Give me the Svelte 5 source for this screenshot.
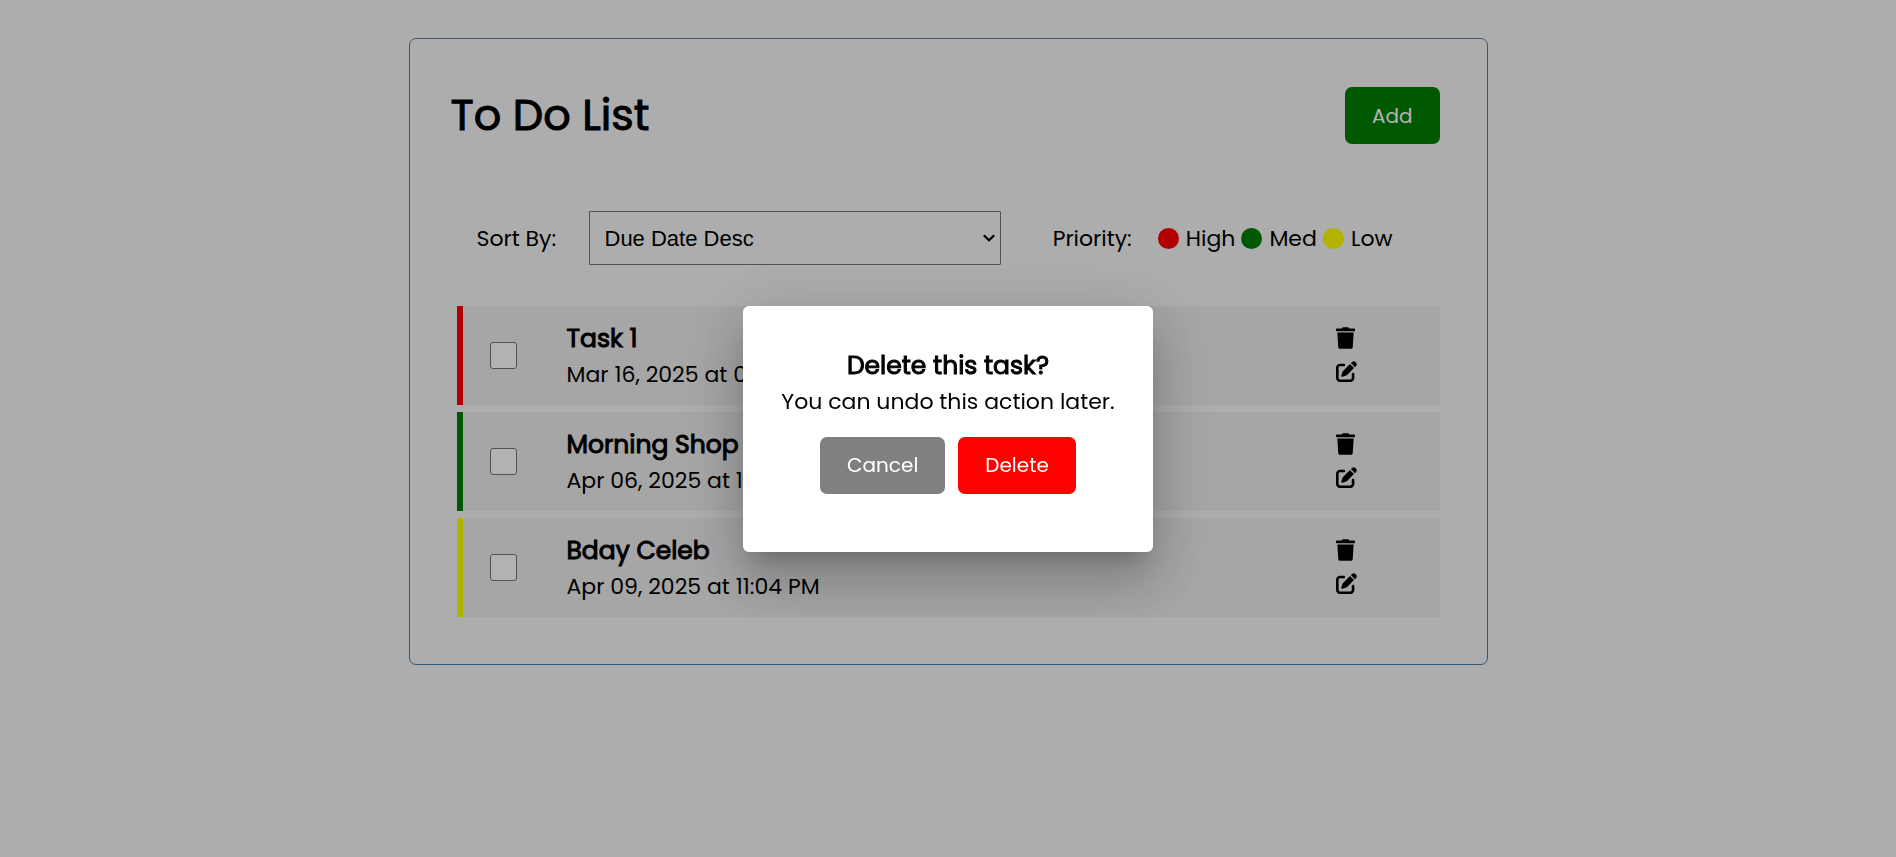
<script>
  let tasks = $state([
    { id: 1, title: 'Task 1', due: 'Mar 16, 2025 at 09:00 AM', priority: 'high', done: false },
    { id: 2, title: 'Morning Shop', due: 'Apr 06, 2025 at 11:00 AM', priority: 'med', done: false },
    { id: 3, title: 'Bday Celeb', due: 'Apr 09, 2025 at 11:04 PM', priority: 'low', done: false }
  ]);

  const priorities = [
    { key: 'high', label: 'High' },
    { key: 'med', label: 'Med' },
    { key: 'low', label: 'Low' }
  ];

  let sortBy = $state('due-desc');
  let taskToDelete = $state(1);

  function confirmDelete() {
    tasks = tasks.filter((task) => task.id !== taskToDelete);
    taskToDelete = null;
  }
</script>

<main class="container">
  <header>
    <h1>To Do List</h1>
    <button class="btn add">Add</button>
  </header>

  <div class="toolbar">
    <label for="sort">Sort By:</label>
    <div class="select">
      <select id="sort" bind:value={sortBy}>
        <option value="due-desc">Due Date Desc</option>
        <option value="due-asc">Due Date Asc</option>
        <option value="priority">Priority</option>
      </select>
      <svg viewBox="0 0 12 8" aria-hidden="true"><path d="M.8 1.2 6 6.2l5.2-5" /></svg>
    </div>
    <div class="legend">
      <span class="legend-title">Priority:</span>
      {#each priorities as p}
        <span class="legend-item"><i class="dot {p.key}"></i>{p.label}</span>
      {/each}
    </div>
  </div>

  <ul>
    {#each tasks as task (task.id)}
      <li class={task.priority}>
        <input type="checkbox" aria-label={task.title} bind:checked={task.done} />
        <div class="details">
          <h2>{task.title}</h2>
          <p>{task.due}</p>
        </div>
        <div class="actions">
          <button aria-label="Delete {task.title}" onclick={() => (taskToDelete = task.id)}>
            <svg class="trash" viewBox="0 0 448 512"><path d="M432 32H312l-9.4-18.7A24 24 0 0 0 281.1 0H166.8a23.72 23.72 0 0 0-21.4 13.3L136 32H16A16 16 0 0 0 0 48v32a16 16 0 0 0 16 16h416a16 16 0 0 0 16-16V48a16 16 0 0 0-16-16zM32 128l21.2 339a48 48 0 0 0 47.9 45h245.8a48 48 0 0 0 47.9-45L416 128H32z" /></svg>
          </button>
          <button aria-label="Edit {task.title}">
            <svg class="edit" viewBox="0 0 512 512"><path d="M471.6 21.7c-21.9-21.9-57.3-21.9-79.2 0L362.3 51.7l97.9 97.9 30.1-30.1c21.9-21.9 21.9-57.3 0-79.2L471.6 21.7zm-299.2 220c-6.1 6.1-10.8 13.6-13.5 21.9l-29.6 88.8c-2.9 8.6-.6 18.1 5.8 24.6s15.9 8.7 24.6 5.8l88.8-29.6c8.2-2.7 15.7-7.4 21.9-13.5L437.7 172.3 339.7 74.3 172.4 241.7zM96 64C43 64 0 107 0 160V416c0 53 43 96 96 96H352c53 0 96-43 96-96V320c0-17.7-14.3-32-32-32s-32 14.3-32 32v96c0 17.7-14.3 32-32 32H96c-17.7 0-32-14.3-32-32V160c0-17.7 14.3-32 32-32h96c17.7 0 32-14.3 32-32s-14.3-32-32-32H96z" /></svg>
          </button>
        </div>
      </li>
    {/each}
  </ul>
</main>

{#if taskToDelete}
  <div class="overlay">
    <div class="modal" role="dialog" aria-modal="true" aria-labelledby="modal-title">
      <h2 id="modal-title">Delete this task?</h2>
      <p>You can undo this action later.</p>
      <div class="modal-actions">
        <button class="btn cancel" onclick={() => (taskToDelete = null)}>Cancel</button>
        <button class="btn delete" onclick={confirmDelete}>Delete</button>
      </div>
    </div>
  </div>
{/if}

<style>
  :global(body) {
    background: #f8f8f8;
    color: #000;
    font-family: Poppins, Inter, sans-serif;
    font-size: 22px;
    line-height: 36px;
  }

  h1, h2, p, ul {
    margin: 0;
    padding: 0;
  }

  .container {
    box-sizing: border-box;
    max-width: 1079px;
    margin: 38px auto;
    padding: 48px 47px 47px;
    border: 1px solid steelblue;
    border-radius: 7px;
  }

  header {
    display: flex;
    justify-content: space-between;
    align-items: center;
    margin-left: -6px;
  }

  h1 {
    font-size: 43px;
    line-height: 57px;
    font-weight: 400;
    -webkit-text-stroke: 1px;
  }

  h2 {
    font-size: 25px;
    line-height: 36px;
    font-weight: 400;
    -webkit-text-stroke: 1px;
  }

  .btn {
    height: 57px;
    padding: 0 27px;
    border: none;
    border-radius: 7px;
    color: #fff;
    font-family: inherit;
    font-size: 20px;
    cursor: pointer;
  }

  .add {
    background: green;
  }

  .toolbar {
    display: flex;
    align-items: center;
    margin: 67px 0 41px;
    padding: 0 47px 0 20px;
  }

  .toolbar label {
    width: 112px;
    padding-top: 2px;
  }

  .select {
    display: grid;
    flex: 1;
    align-items: center;
  }

  select {
    grid-area: 1 / 1;
    width: 100%;
    height: 54px;
    padding: 0 15px;
    appearance: none;
    background: transparent;
    border: 1px solid #767676;
    border-radius: 1px;
    color: #000;
    font-family: "Liberation Sans", Arial, sans-serif;
    font-size: 22px;
  }

  .select svg {
    grid-area: 1 / 1;
    justify-self: end;
    width: 12px;
    height: 8px;
    margin-right: 6px;
    pointer-events: none;
    fill: none;
    stroke: #000;
    stroke-width: 2.2;
  }

  .legend {
    display: flex;
    gap: 6px;
    margin-left: 52px;
    padding-top: 2px;
  }

  .legend-title {
    margin-right: 20px;
  }

  .legend-item {
    display: flex;
    align-items: center;
    gap: 7px;
  }

  .dot {
    width: 21px;
    height: 21px;
    margin-bottom: 2px;
    border-radius: 50%;
  }

  .dot.high { background: red; }
  .dot.med { background: green; }
  .dot.low { background: yellow; }

  ul {
    display: flex;
    flex-direction: column;
    gap: 7px;
    list-style: none;
  }

  li {
    display: flex;
    align-items: center;
    height: 99px;
    padding-left: 27px;
    border-left: 6px solid;
    background: #eee;
  }

  li.high { border-color: red; }
  li.med { border-color: green; }
  li.low { border-color: yellow; }

  input {
    box-sizing: border-box;
    width: 27px;
    height: 27px;
    margin: 0;
    appearance: none;
    background: #fff;
    border: 1px solid #767676;
    border-radius: 3px;
  }

  input:checked {
    background: steelblue;
  }

  .details {
    flex: 1;
    margin-left: 50px;
    padding-top: 2px;
  }

  .actions {
    display: flex;
    flex-direction: column;
    gap: 12px;
    width: 104px;
    padding-bottom: 2px;
  }

  .actions button {
    display: flex;
    padding: 0;
    border: none;
    background: none;
    cursor: pointer;
  }

  .trash {
    width: 19px;
    height: 22px;
  }

  .edit {
    width: 21px;
    height: 21px;
  }

  .overlay {
    position: fixed;
    inset: 0;
    display: flex;
    align-items: center;
    justify-content: center;
    background: rgba(0, 0, 0, 0.3);
  }

  .modal {
    padding: 42px 38px 58px;
    border-radius: 6px;
    background: #fff;
    text-align: center;
    box-shadow:
      0 15px 20px -9px rgba(0, 0, 0, 0.2),
      0 32px 51px 4px rgba(0, 0, 0, 0.14),
      0 12px 61px 11px rgba(0, 0, 0, 0.12);
  }

  .modal-actions {
    display: flex;
    justify-content: center;
    gap: 13px;
    margin-top: 17px;
  }

  .cancel {
    background: gray;
  }

  .delete {
    background: red;
  }
</style>
